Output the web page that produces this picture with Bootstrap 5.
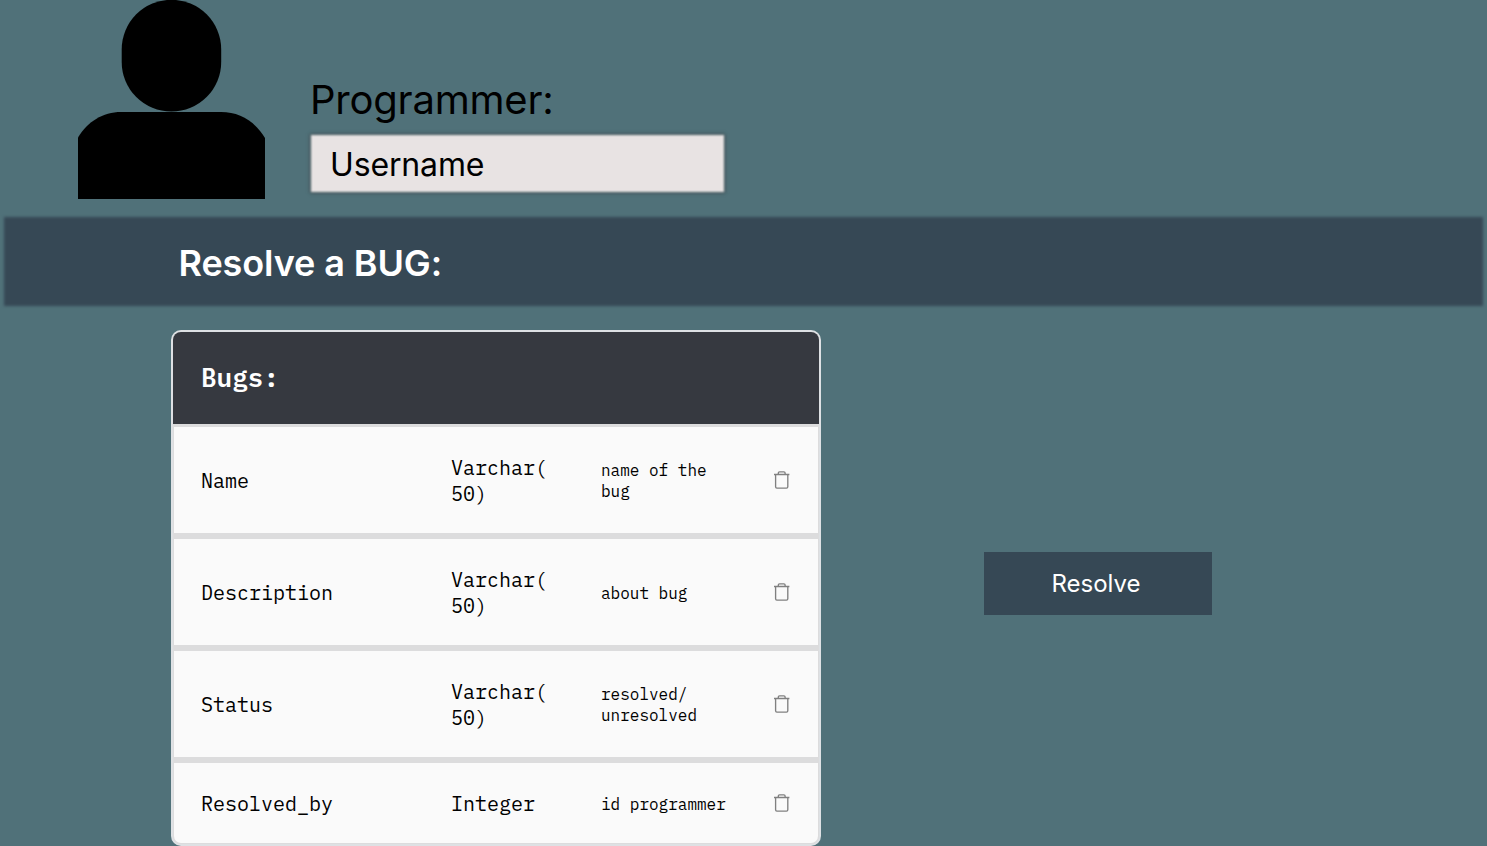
<!DOCTYPE html>
<html lang="en">
<head>
<meta charset="utf-8">
<meta name="viewport" content="width=device-width, initial-scale=1">
<title>Resolve a BUG</title>
<link href="https://cdn.jsdelivr.net/npm/bootstrap@5.3.0/dist/css/bootstrap.min.css" rel="stylesheet">
<style>
  body { background: #507179; color: #000; font-family: Inter, sans-serif; height: 846px; overflow: hidden; }
  .profile { height: 217px; padding-left: 78px; gap: 46px; }
  .role-label { font-size: 40px; line-height: 48px; margin: 76px 0 10px -1px; letter-spacing: -.22px; }
  .user-box { position: relative; isolation: isolate; width: 413px; height: 57px; padding: 0 0 0 19px; font-size: 32px; line-height: 62px; letter-spacing: -.15px; }
  .user-box::before { content: ""; position: absolute; inset: .5px 0 -.5px; z-index: -1; background: #e8e3e3; box-shadow: 0 0 3px 1px rgba(58,62,66,.75); filter: blur(1.2px); }
  .title-bar { position: relative; isolation: isolate; height: 89px; margin: 0 4px; padding-left: 174.5px; }
  .title-bar::before { content: ""; position: absolute; inset: 0; z-index: -1; background: #364855; filter: blur(1.5px); }
  .title-bar h1 { font-size: 36px; line-height: 44px; font-weight: 600; letter-spacing: -.1px; color: #fff; padding-top: 3px; }
  .bugs { width: 650px; height: 516px; margin: 24px 0 0 171px; border: 2px solid #dee1e4; border-radius: 10px; background: #ddd; overflow: hidden; font-family: "IBM Plex Mono", "Liberation Mono", monospace; }
  .bugs-head { height: 92px; padding: 0 0 1px 28px; background: #363940; color: #fff; font-size: 26px; font-weight: 600; }
  .bugs-list { padding: 3px 1px 1px; gap: 6px; background: #dcdcdd; }
  .bug-row { height: 106px; padding: 0 27.5px 0 27px; background: #fafafa; }
  .bug-row:last-child { height: 80px; border-radius: 0 0 7px 7px; }
  .f-name { width: 250px; font-size: 20px; line-height: 26px; padding-top: 2px; }
  .f-type { width: 150px; font-size: 20px; line-height: 26px; padding-top: 1px; }
  .f-note { width: 150px; font-size: 16px; line-height: 21px; padding-top: 2px; }
  .resolve-btn { width: 228px; height: 63px; margin: 246px 0 0 163px; background: #364855; color: #fff; font-size: 24px; border: 0; border-radius: 0; }
</style>
</head>
<body>
<svg class="d-none">
  <symbol id="trash" viewBox="0 0 18 20">
    <path d="M1 4.500h15.400M5.300 4.200V3q0-1.200 1.200-1.200h4.400q1.200 0 1.200 1.200v1.200M2.600 4.700v12.100q0 1.300 1.300 1.300h9.600q1.300 0 1.300-1.300v-12.100" fill="none" stroke="#808080" stroke-width="1.350"/>
  </symbol>
</svg>
<header class="profile d-flex align-items-start">
  <svg width="187" height="199" viewBox="0 0 187 199" class="flex-shrink-0">
    <rect x="43.700" y="-.2" width="99.500" height="111.800" rx="49.700"/>
    <path d="M0 137.500C9 122 25 112 43 112H143C162 112 177 121.500 187 138V199H0Z"/>
  </svg>
  <div>
    <div class="role-label">Programmer:</div>
    <div class="user-box">Username</div>
  </div>
</header>
<div class="title-bar d-flex align-items-center"><h1 class="m-0">Resolve a BUG:</h1></div>
<main class="d-flex align-items-start">
  <section class="bugs flex-shrink-0">
    <div class="bugs-head d-flex align-items-center">Bugs:</div>
    <div class="bugs-list d-flex flex-column">
      <div class="bug-row d-flex align-items-center">
        <div class="f-name">Name</div><div class="f-type">Varchar(<br>50)</div><div class="f-note">name of the<br>bug</div>
        <svg class="ms-auto" width="18" height="20"><use href="#trash"/></svg>
      </div>
      <div class="bug-row d-flex align-items-center">
        <div class="f-name">Description</div><div class="f-type">Varchar(<br>50)</div><div class="f-note">about bug</div>
        <svg class="ms-auto" width="18" height="20"><use href="#trash"/></svg>
      </div>
      <div class="bug-row d-flex align-items-center">
        <div class="f-name">Status</div><div class="f-type">Varchar(<br>50)</div><div class="f-note">resolved/<br>unresolved</div>
        <svg class="ms-auto" width="18" height="20"><use href="#trash"/></svg>
      </div>
      <div class="bug-row d-flex align-items-center">
        <div class="f-name">Resolved_by</div><div class="f-type">Integer</div><div class="f-note">id programmer</div>
        <svg class="ms-auto" width="18" height="20"><use href="#trash"/></svg>
      </div>
    </div>
  </section>
  <button class="resolve-btn btn p-0 pe-1">Resolve</button>
</main>
<script src="https://cdn.jsdelivr.net/npm/bootstrap@5.3.0/dist/js/bootstrap.bundle.min.js"></script>
</body>
</html>
